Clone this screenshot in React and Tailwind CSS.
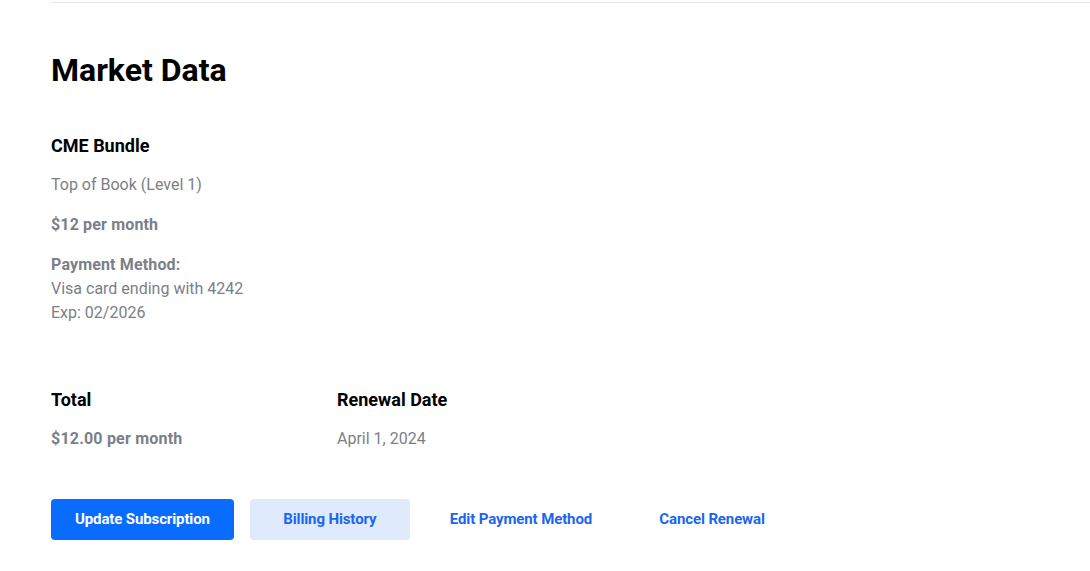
export default function App() {
  return (
    <div className="min-h-screen bg-white" style={{ fontFamily: "Roboto, 'Liberation Sans', sans-serif" }}>
      <div className="ml-[51px] pt-[2px]">
        <div className="border-t border-[#e5e7eb]" />
        <h1 className="mt-[47px] text-[32px] leading-[40px] font-bold text-black">Market Data</h1>

        <div className="mt-[44px]">
          <h2 className="text-[18px] leading-6 font-bold text-black">CME Bundle</h2>
          <p className="mt-[15px] text-base leading-6 text-[#7b7f87]">Top of Book (Level 1)</p>
          <p className="mt-4 text-base leading-6 font-bold tracking-[0.15px] text-[#7b7f87]">$12 per month</p>
          <div className="mt-4 text-base leading-6 text-[#7b7f87]">
            <p className="font-bold tracking-[0.15px]">Payment Method:</p>
            <p>Visa card ending with 4242</p>
            <p>Exp: 02/2026</p>
          </div>
        </div>

        <div className="mt-[63px] flex">
          <div className="w-[286px]">
            <h3 className="text-[18px] leading-6 font-bold text-black">Total</h3>
            <p className="mt-[15px] text-base leading-6 font-bold tracking-[0.2px] text-[#7b7f87]">$12.00 per month</p>
          </div>
          <div>
            <h3 className="text-[18px] leading-6 font-bold text-black">Renewal Date</h3>
            <p className="mt-[15px] text-base leading-6 text-[#7b7f87]">April 1, 2024</p>
          </div>
        </div>

        <div className="mt-[48px] flex gap-4">
          <button className="h-[41px] min-w-[160px] px-6 pb-px rounded-[4px] bg-[#0a6cff] text-white text-[15px] tracking-[-0.12px] font-bold">
            Update Subscription
          </button>
          <button className="h-[41px] min-w-[160px] px-6 pb-px rounded-[4px] bg-[#dfeafd] text-[#1a66f0] text-[15px] tracking-[-0.12px] font-bold">
            Billing History
          </button>
          <button className="h-[41px] min-w-[160px] px-6 pb-px rounded-[4px] text-[#1a66f0] text-[15px] tracking-[-0.12px] font-bold">
            Edit Payment Method
          </button>
          <button className="h-[41px] min-w-[160px] px-6 pb-px rounded-[4px] text-[#1a66f0] text-[15px] tracking-[-0.12px] font-bold">
            Cancel Renewal
          </button>
        </div>
      </div>
    </div>
  );
}
